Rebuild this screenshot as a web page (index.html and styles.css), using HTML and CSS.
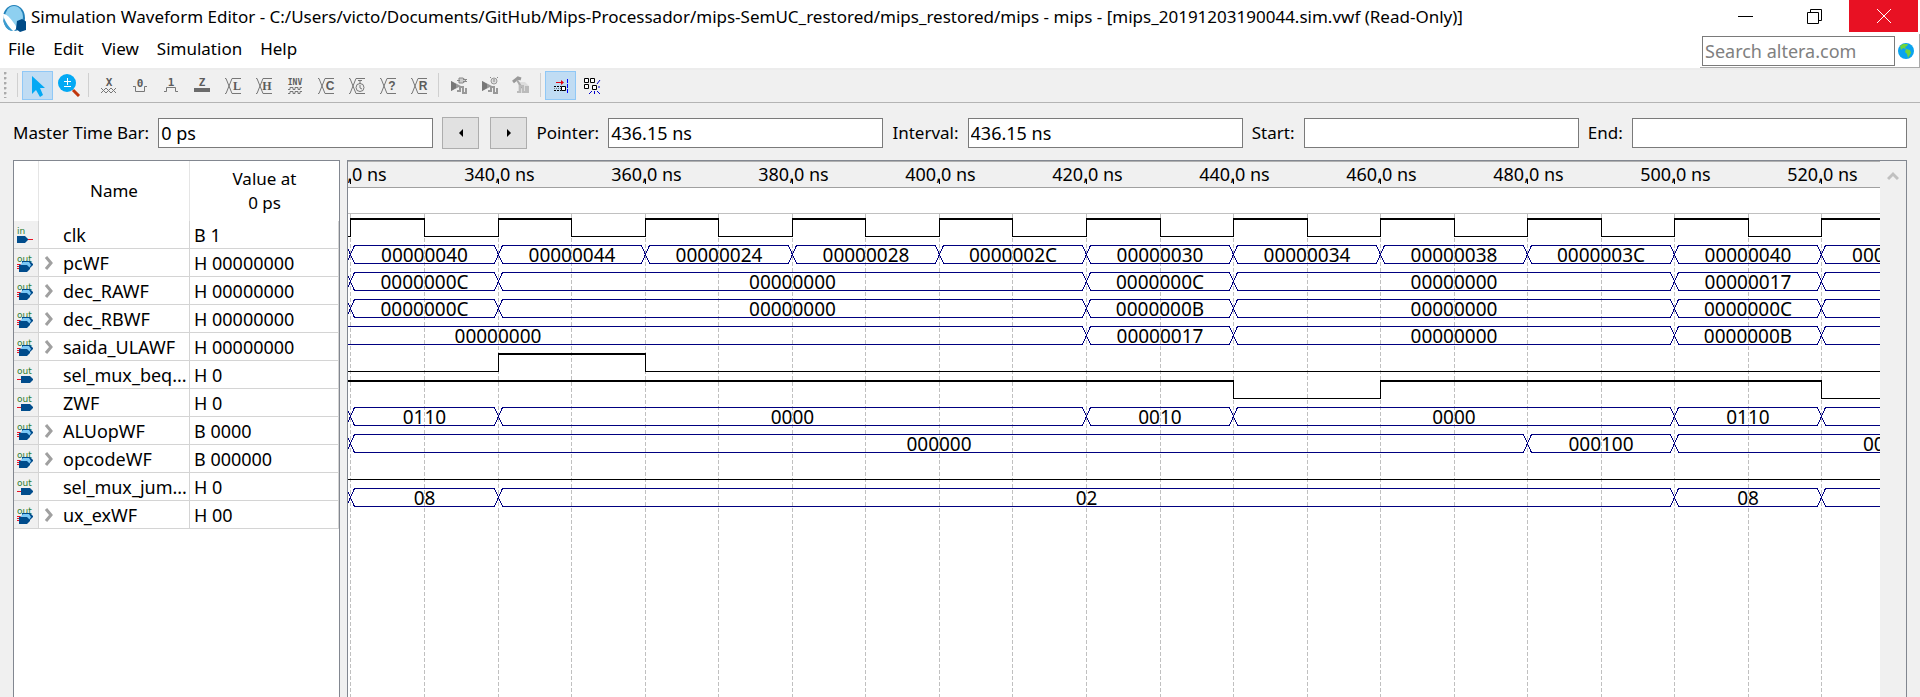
FILE: index.html
```html
<!DOCTYPE html>
<html lang="en">
<head>
<meta charset="utf-8">
<title>Simulation Waveform Editor</title>
<link rel="stylesheet" href="styles.css">
</head>
<body>
<svg class="defs" aria-hidden="true">
  <symbol id="cross" viewBox="0 0 24 24">
    <path d="M4 5.500h1l6 15h9M4 20.500h1l6-15h9" fill="none" stroke="#777"/>
  </symbol>
  <symbol id="run-wave" viewBox="0 0 24 24">
    <path d="M4 8l10 5-10 5z" fill="#999"/><path d="M4 8l5 3v4l-5 3z" fill="#777"/>
    <path d="M10 18h3v-4h3v6h3v-4h1" fill="none" stroke="#999" stroke-width="2"/>
  </symbol>
</svg>

<header class="titlebar">
  <svg class="logo" viewBox="0 0 24 28" aria-hidden="true">
    <ellipse cx="12" cy="14" rx="11" ry="13" fill="#1f7fb8"/>
    <ellipse cx="12" cy="13" rx="9" ry="11" fill="#8ed0f0"/>
    <path d="M1 10C4 9 10 15 15 24l-3 3C6 27 1 20 1 10z" fill="#fff"/>
    <path d="M2 14c2 5 5 9 9 13C5 27 1 21 2 14z" fill="#3a9bd0"/>
    <path d="M15 17l5-2 5 3-1 8-6 2-4-3z" fill="#004b87"/>
  </svg>
  <h1 class="title">Simulation Waveform Editor - C:/Users/victo/Documents/GitHub/Mips-Processador/mips-SemUC_restored/mips_restored/mips - mips - [mips_20191203190044.sim.vwf (Read-Only)]</h1>
  <button class="win" aria-label="Minimize"><svg viewBox="0 0 16 16"><path d="M0 8.500h15" stroke="#000"/></svg></button>
  <button class="win" aria-label="Restore"><svg viewBox="0 0 16 16"><path d="M.5 4.500h11v11H.5zM3.500 4V1.500h11v11H12" fill="none" stroke="#000"/></svg></button>
  <button class="win close" aria-label="Close"><svg viewBox="0 0 16 16"><path d="M1 1l14 14M15 1L1 15" stroke="#fff"/></svg></button>
</header>

<div class="menubar">
  <nav class="menus">
    <button>File</button><button>Edit</button><button>View</button><button>Simulation</button><button>Help</button>
  </nav>
  <div class="search">
    <input type="search" placeholder="Search altera.com" aria-label="Search altera.com">
    <button aria-label="Go"><svg viewBox="0 0 16 16"><circle cx="8" cy="8" r="8" fill="#0aa3ee"/><path d="M2 3l3-2 5 0-1 2-2 1 1 2-3-1-2 2zM8 6l4 1 1 3-3 5-1-4-2-2z" fill="#6fd43a"/></svg></button>
  </div>
</div>

<div class="toolbar" role="toolbar">
  <span class="grip"></span>
  <span class="sep"></span>
  <button class="on" aria-label="Select"><svg viewBox="0 0 24 24"><path d="M6 3v18l4-4 4 7 3-2-3-7h5z" fill="#03a9f4"/></svg></button>
  <button aria-label="Zoom"><svg viewBox="0 0 24 24"><path d="M16 17l6 6" stroke="#c0360c" stroke-width="3"/><circle cx="10" cy="10" r="9" fill="#03a9f4"/><path d="M7 8.500h7M10.500 5v7M7 13.500h7" stroke="#fff"/></svg></button>
  <span class="sep"></span>
  <button aria-label="Unknown"><svg viewBox="0 0 24 24"><text class="glyph mono" x="12" y="13">X</text><path d="M4 15l5 5 5-5 5 5M4 20l5-5 5 5 5-5" fill="none" stroke="#777"/></svg></button>
  <button aria-label="Forcing low"><svg viewBox="0 0 24 24"><text class="glyph mono" x="12" y="14">0</text><path d="M5 13.500h2.500v5h9v-5H19" fill="none" stroke="#777"/></svg></button>
  <button aria-label="Forcing high"><svg viewBox="0 0 24 24"><text class="glyph mono" x="12" y="13">1</text><path d="M5 18.500h2.500v-4h9v4H19" fill="none" stroke="#777"/></svg></button>
  <button aria-label="High impedance"><svg viewBox="0 0 24 24"><text class="glyph mono" x="12" y="13">Z</text><path d="M4 17h16" stroke="#6b6b6b" stroke-width="4"/></svg></button>
  <button aria-label="Weak low"><svg viewBox="0 0 24 24"><use href="#cross"/><text class="glyph serif" x="16" y="17">L</text></svg></button>
  <button aria-label="Weak high"><svg viewBox="0 0 24 24"><use href="#cross"/><text class="glyph serif" x="15" y="17">H</text></svg></button>
  <button aria-label="Invert"><svg viewBox="0 0 24 24"><text class="glyph tiny" x="12" y="12">INV</text><path d="M5 16.500h2v-2h3v2h2v-2h3v2h2v-2h2M5 20.500h2v-2h3v2h2v-2h3v2h2v-2h2" fill="none" stroke="#777"/></svg></button>
  <button aria-label="Count value"><svg viewBox="0 0 24 24"><use href="#cross"/><text class="glyph sans" x="16" y="17">C</text></svg></button>
  <button aria-label="Clock"><svg viewBox="0 0 24 24"><use href="#cross"/><circle cx="15" cy="14.500" r="4" fill="#eee" stroke="#777"/><path d="M15 7v4M13 7.500h4M15 12v3l2 1" stroke="#777" fill="none"/></svg></button>
  <button aria-label="Arbitrary value"><svg viewBox="0 0 24 24"><use href="#cross"/><text class="glyph sans" x="16" y="17">?</text></svg></button>
  <button aria-label="Random values"><svg viewBox="0 0 24 24"><use href="#cross"/><text class="glyph sans" x="16" y="17">R</text></svg></button>
  <span class="sep"></span>
  <button aria-label="Run functional simulation"><svg viewBox="0 0 24 24"><use href="#run-wave"/><path d="M10 7.500h3M12 5h4l3 2.500-3 2.500h-4zM16 6.500h4M16 8.500h4" fill="#ccc" stroke="#888"/></svg></button>
  <button aria-label="Run timing simulation"><svg viewBox="0 0 24 24"><use href="#run-wave"/><circle cx="16" cy="8" r="3" fill="#ddd" stroke="#999"/><path d="M16 6v3M12 4l1 1M20 4l-1 1" stroke="#888"/></svg></button>
  <button aria-label="Generate testbench"><svg viewBox="0 0 24 24"><path d="M9 9h7l4 4v7H9z" fill="#ddd"/><path d="M4 9l5-4 3 1" stroke="#999" fill="none" stroke-width="3"/><path d="M8 7l5 8" stroke="#aaa" stroke-width="2"/><path d="M8 19h3v-6h3v6h3v-5h2v6" fill="none" stroke="#bbb" stroke-width="2"/></svg></button>
  <span class="sep"></span>
  <button class="on" aria-label="Snap to transition"><svg viewBox="0 0 24 24"><path d="M7 9.500h7" stroke="#e00010"/><path d="M12 7l3 2.500-3 2.500z" fill="#e00010"/><path d="M5 13.500h7M5 17.500h7" stroke="#000" stroke-dasharray="2 1"/><path d="M5 15.500h7" stroke="#777" stroke-dasharray="1 1"/><path d="M12.500 13.500h4v4h-4z" fill="#fff" stroke="#000"/><path d="M18.500 6v15" stroke="#00f" stroke-dasharray="4 1"/></svg></button>
  <button aria-label="Snap to grid"><svg viewBox="0 0 24 24"><path d="M4.500 5.500h4v4h-4zM10.500 5.500h4v4h-4zM4.500 11.500h4v4h-4zM12.500 12.500h4v4h-4z" fill="#fff" stroke="#000"/><path d="M17 11l3-4M18 14h2M17 18l3 3M14.500 18v3M12 18l-3 3" stroke="#00c"/></svg></button>
</div>

<main class="workspace">
  <form class="timebar">
    <label for="master">Master Time Bar:</label>
    <input id="master" type="text" value="0 ps">
    <div class="steps">
      <button type="button" aria-label="Previous transition"><svg viewBox="0 0 8 8"><path d="M6 0v8L2 4z"/></svg></button>
      <button type="button" aria-label="Next transition"><svg viewBox="0 0 8 8"><path d="M2 0v8l4-4z"/></svg></button>
    </div>
    <label for="pointer">Pointer:</label>
    <input id="pointer" type="text" value="436.15 ns">
    <label for="interval">Interval:</label>
    <input id="interval" type="text" value="436.15 ns">
    <label for="start">Start:</label>
    <input id="start" type="text">
    <label for="end">End:</label>
    <input id="end" type="text">
  </form>

  <div class="panes">
    <section class="signals">
      <table>
        <colgroup><col class="c-icon"><col class="c-name"><col></colgroup>
        <thead><tr><th></th><th>Name</th><th>Value at<br>0 ps</th></tr></thead>
        <tbody id="signals"></tbody>
      </table>
    </section>
    <section class="waves">
      <div class="view">
        <div class="ruler"><svg id="ruler"></svg></div>
        <div class="band"></div>
        <svg id="plot" class="plot"></svg>
      </div>
      <div class="scroll"><button aria-label="Scroll up"><svg viewBox="0 0 12 10"><path d="M1 8l5-5 5 5" fill="none" stroke="#c0c0c0" stroke-width="3"/></svg></button></div>
    </section>
  </div>
</main>
<script src="waves.js"></script>
</body>
</html>
```
FILE: styles.css
```css
* { box-sizing: border-box; }

body {
  margin: 0;
  height: 100vh;
  display: flex;
  flex-direction: column;
  overflow: hidden;
  background: #f0f0f0;
  color: #000;
  font: 18px/24px "Noto Sans", sans-serif;
}

button, input { font: inherit; color: inherit; }
button { border: 0; padding: 0; background: none; }
svg { display: block; }
.defs { position: absolute; width: 0; height: 0; }

.titlebar {
  display: flex;
  align-items: center;
  height: 34px;
  padding: 0 2px;
  background: #fff;
}
.logo { width: 24px; height: 28px; margin-top: 2px; }
.title {
  flex: 1;
  min-width: 0;
  margin: 0 0 0 5px;
  overflow: hidden;
  white-space: nowrap;
  font-size: 17px;
  font-weight: 400;
}
.win {
  width: 69px;
  height: 32px;
  align-self: flex-start;
  display: grid;
  place-items: center;
}
.win svg { width: 16px; height: 16px; }
.close { background: #e81123; }

.menubar {
  display: flex;
  justify-content: space-between;
  height: 36px;
  background: #fff;
  border-bottom: 2px solid #ececec;
}
.menus { display: flex; gap: 18px; padding: 3px 8px; align-items: flex-start; font-size: 17px; }
.search {
  display: flex;
  align-items: center;
  gap: 3px;
  padding: 0 5px 0 2px;
  border-right: 1px solid #aaa;
  border-bottom: 1px solid #aaa;
}
.search input { width: 193px; height: 30px; }
.search input::placeholder { color: #808080; opacity: 1; }
.search svg { width: 16px; height: 16px; }

input {
  min-width: 0;
  padding: 0 2px;
  border: 1px solid #7a7a7a;
  border-radius: 0;
  background: #fff;
  appearance: none;
}

.toolbar {
  display: flex;
  align-items: center;
  height: 33px;
  padding: 0 0 2px 4px;
  border-bottom: 1px solid #b4b4b4;
}
.grip { width: 9px; height: 26px; background: radial-gradient(circle at 1px 1px, #aaa 1px, transparent 2px) 0 0 / 9px 5px; }
.sep { width: 9px; height: 24px; background: linear-gradient(#d0d0d0, #d0d0d0) center / 1px 100% no-repeat; }
.toolbar button { width: 31px; height: 29px; display: grid; place-items: center; }
.toolbar svg { width: 24px; height: 24px; }
.toolbar .on { background: #c0dcf3; border: 1px solid #90c8f6; }
.glyph { fill: #5c5c5c; text-anchor: middle; font-weight: 700; }
.mono { font-size: 11px; font-family: "DejaVu Sans Mono", monospace; }
.serif { font-size: 12px; font-family: "Liberation Serif", serif; }
.sans { font-size: 12px; font-family: "Liberation Sans", sans-serif; }
.tiny { font-size: 8px; font-family: "DejaVu Sans Mono", monospace; }

.workspace {
  flex: 1;
  min-height: 0;
  display: flex;
  flex-direction: column;
  gap: 11px;
  padding: 14px 13px 0;
}
.timebar { display: flex; align-items: center; gap: 9px; height: 32px; }
.timebar label { font-size: 17px; }
.timebar input { flex: 1; height: 30px; }
.steps { display: flex; gap: 11px; }
.steps button {
  width: 37px;
  height: 32px;
  display: grid;
  place-items: center;
  border: 1px solid #adadad;
  background: #e1e1e1;
}
.steps svg { width: 8px; height: 8px; }

.panes { flex: 1; min-height: 0; display: flex; gap: 7px; }
.signals {
  width: 327px;
  border: 1px solid #828790;
  border-bottom: 0;
  background: #fff;
}
.signals table {
  width: 100%;
  table-layout: fixed;
  border-collapse: separate;
  border-spacing: 0;
}
.c-icon { width: 25px; }
.c-name { width: 151px; }
th {
  height: 60px;
  padding: 0;
  border-right: 1px solid #e5e5e5;
  font-size: 17px;
  font-weight: 400;
}
td {
  height: 28px;
  padding: 0 4px;
  border-right: 1px solid #d4d4d4;
  border-bottom: 1px solid #d4d4d4;
  white-space: nowrap;
}
th:last-child { border-right: 0; }
td:first-child { padding: 0 3px; background: #f0f0f0; }
td svg { width: 18px; height: 18px; }
.name { display: flex; align-items: center; gap: 9px; padding-left: 1px; }
.name svg, .leaf { flex: none; width: 10px; height: 14px; }
.pin-label { fill: #2e7d32; font: 9px "DejaVu Sans", sans-serif; }

.waves {
  flex: 1;
  min-width: 0;
  display: flex;
  border: 1px solid #828790;
  border-bottom: 0;
}
.view { flex: 1; min-width: 0; display: flex; flex-direction: column; background: #fff; }
.ruler { height: 27px; background: #f0f0f0; border-top: 1px solid #b0b0b0; border-bottom: 1px solid #a0a0a0; }
.ruler svg { width: 100%; height: 25px; }
.band { height: 26px; border-bottom: 1px solid #c0c0c0; }
.plot { flex: 1; width: 100%; min-height: 0; }
.scroll { width: 26px; background: #f0f0f0; }
.scroll button { width: 26px; height: 30px; display: grid; place-items: center; }
.scroll svg { width: 12px; height: 10px; }
.tick { font-size: 18px; text-anchor: middle; }
.value { font-size: 19px; text-anchor: middle; }
.grid { stroke: #c0c0c0; stroke-dasharray: 4 2; }
.bus { fill: none; stroke: #000080; shape-rendering: crispEdges; }
.level { fill: none; stroke: #000; shape-rendering: crispEdges; }
.high { stroke: #000; stroke-width: 2; shape-rendering: crispEdges; }
```
FILE: waves.js
```javascript
// Time axis: first visible transition at 320 ns.
const ORIGIN = 2, PX_PER_NS = 7.355, ROW = 27;
const xAt = ns => Math.ceil(ORIGIN + (ns - 320) * PX_PER_NS);

// Each bus is a list of [start ns, value]; each bit is a list of [start ns, level].
const signals = [
  { name: "clk", value: "B 1", pin: "in", bit: Array.from({ length: 28 }, (_, i) => [310 + i * 10, i % 2]) },
  { name: "pcWF", value: "H 00000000", bus: [[300, ""], [320, "00000040"], [340, "00000044"], [360, "00000024"], [380, "00000028"], [400, "0000002C"], [420, "00000030"], [440, "00000034"], [460, "00000038"], [480, "0000003C"], [500, "00000040"], [520, "00000044"], [540, ""]] },
  { name: "dec_RAWF", value: "H 00000000", bus: [[300, ""], [320, "0000000C"], [340, "00000000"], [420, "0000000C"], [440, "00000000"], [500, "00000017"], [520, ""], [580, ""]] },
  { name: "dec_RBWF", value: "H 00000000", bus: [[300, ""], [320, "0000000C"], [340, "00000000"], [420, "0000000B"], [440, "00000000"], [500, "0000000C"], [520, ""], [580, ""]] },
  { name: "saida_ULAWF", value: "H 00000000", bus: [[260, "00000000"], [420, "00000017"], [440, "00000000"], [500, "0000000B"], [520, ""], [580, ""]] },
  { name: "sel_mux_beq...", value: "H 0", pin: "out", bit: [[300, 0], [340, 1], [360, 0], [580, 0]] },
  { name: "ZWF", value: "H 0", pin: "out", bit: [[300, 1], [440, 0], [460, 1], [520, 0], [580, 0]] },
  { name: "ALUopWF", value: "B 0000", bus: [[300, ""], [320, "0110"], [340, "0000"], [420, "0010"], [440, "0000"], [500, "0110"], [520, ""], [580, ""]] },
  { name: "opcodeWF", value: "B 000000", bus: [[300, ""], [320, "000000"], [480, "000100"], [500, "000000"], [560, ""]] },
  { name: "sel_mux_jum...", value: "H 0", pin: "out", bit: [[300, 0], [580, 0]] },
  { name: "ux_exWF", value: "H 00", bus: [[300, ""], [320, "08"], [340, "02"], [500, "08"], [520, ""], [580, ""]] }
];

const pins = {
  in: `<text class="pin-label" x="0" y="8">in</text>
    <path d="M0 10h8l3 3v1l-3 3H0z" fill="#004c8c"/><path d="M11 13.500h5" stroke="#e81123"/>`,
  out: `<text class="pin-label" x="0" y="8">out</text>
    <path d="M0 13.500h4" stroke="#e81123"/><path d="M4 10h9l3 3v1l-3 3H4z" fill="#004c8c"/>`,
  bus: `<text class="pin-label" x="0" y="8">out</text>
    <path d="M0 10.500h4M0 12.500h3M0 14.500h3" stroke="#e81123"/>
    <path d="M5 7h8l3 3v1l-3 3H5z" fill="#004c8c"/>
    <path d="M3 11l3-3h6l2 3-2 3H3z" fill="#7cc8f5"/>
    <path d="M2 11h8l3 3v1l-3 3H2z" fill="#004c8c"/>`
};

const chevron = '<svg viewBox="0 0 10 14"><path d="M2 1l5 6-5 6" fill="none" stroke="#a0a0a0" stroke-width="3"/></svg>';

document.getElementById("signals").innerHTML = signals.map(s => `<tr>
  <td><svg viewBox="0 0 18 18">${pins[s.pin || "bus"]}</svg></td>
  <td><div class="name">${s.bus ? chevron : '<span class="leaf"></span>'}<span>${s.name}</span></div></td>
  <td>${s.value}</td></tr>`).join("");

let ruler = "", grid = "";
for (let ns = 320; ns <= 560; ns += 10) {
  const x = xAt(ns) + 0.5;
  grid += `<path class="grid" d="M${x} 0V2000"/>`;
  if (ns % 20 === 0) {
    ruler += `<path d="M${x} 17v5" stroke="#000"/>`;
    if (ns <= 520) ruler += `<text class="tick" x="${x + 1}" y="19">${ns},0 ns</text>`;
  }
}
document.getElementById("ruler").innerHTML = ruler;

function drawBus(cells, top) {
  const low = top + 18, out = [];
  for (let i = 0; i < cells.length - 1; i++) {
    const a = xAt(cells[i][0]) + 0.5, b = xAt(cells[i + 1][0]) + 0.5;
    out.push(`<path class="bus" d="M${a - 4} ${top}L${a + 4} ${low}H${b - 4}M${a - 4} ${low}L${a + 4} ${top}H${b - 4}"/>`);
    if (cells[i][1]) out.push(`<text class="value" x="${(a + b) / 2}" y="${top + 16}">${cells[i][1]}</text>`);
  }
  return out.join("");
}

function drawBit(steps, top) {
  const low = top + 18;
  let line = "", high = "";
  for (let i = 0; i < steps.length - 1; i++) {
    const a = xAt(steps[i][0]) + 0.5, b = xAt(steps[i + 1][0]) + 0.5;
    if (steps[i][1]) {
      line += `M${a} ${low}V${top}M${b} ${top}V${low}`;
      high += `M${a - 0.5} ${top + 0.5}H${b + 0.5}`;
    } else {
      line += `M${a} ${low}H${b}`;
    }
  }
  return `<path class="level" d="${line}"/><path class="high" d="${high}"/>`;
}

document.getElementById("plot").innerHTML = grid + signals.map((s, i) => {
  const top = 4.5 + i * ROW;
  return s.bus ? drawBus(s.bus, top) : drawBit(s.bit, top);
}).join("");
```
